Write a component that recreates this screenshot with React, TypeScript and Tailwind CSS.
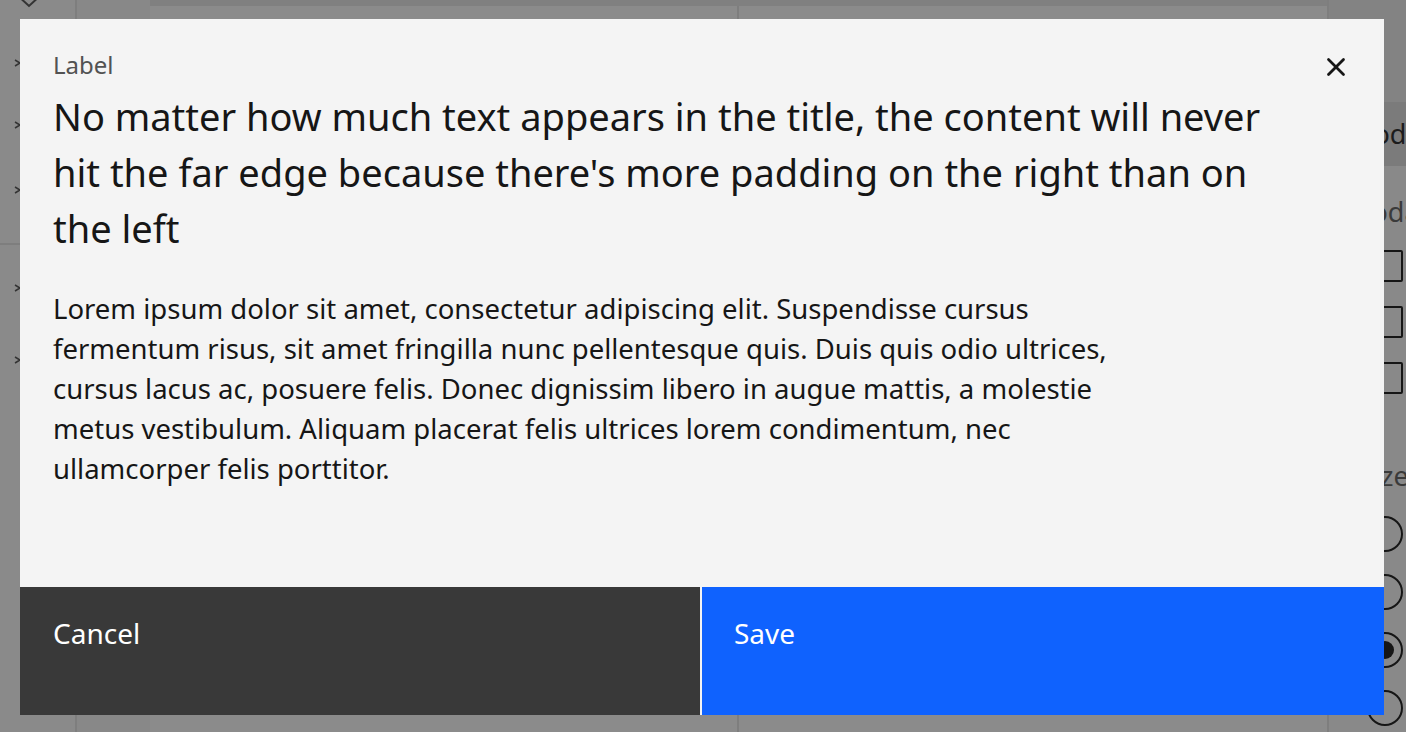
import { X } from "lucide-react";

const font = { fontFamily: '"Noto Sans", "Open Sans", sans-serif' };

const navRows = [63, 125, 190, 290, 362];

function Backdrop() {
   return (
      <div className="absolute inset-0 flex bg-[#8a8a8a]">
         {/* left nav */}
         <div className="w-[77px] shrink-0 flex flex-col border-r-2 border-[#7e7e7e]">
            <div className="h-[245px] border-b-2 border-[#7e7e7e] relative">
               <svg width="30" height="16" viewBox="0 0 30 16" className="absolute left-[14px] top-[-8px]">
                  <path d="M2 2 L15 14 L28 2" fill="none" stroke="#333" strokeWidth="2" />
               </svg>
               {navRows.slice(0, 3).map((y) => (
                  <svg key={y} width="8" height="8" viewBox="0 0 8 8" className="absolute left-[14px]" style={{ top: y - 4 }}>
                     <path d="M1 1 L6 4 L1 7" fill="none" stroke="#333" strokeWidth="1.5" />
                  </svg>
               ))}
            </div>
            <div className="flex-1 relative">
               {navRows.slice(3).map((y) => (
                  <svg key={y} width="8" height="8" viewBox="0 0 8 8" className="absolute left-[14px]" style={{ top: y - 247 - 4 }}>
                     <path d="M1 1 L6 4 L1 7" fill="none" stroke="#333" strokeWidth="1.5" />
                  </svg>
               ))}
            </div>
         </div>
         <div className="w-[73px] shrink-0 bg-[#888888]" />
         {/* main */}
         <div className="flex-1 flex flex-col">
            <div className="h-[6px] bg-[#808080]" />
            <div className="flex-1 flex">
               <div className="w-[589px] border-r-2 border-[#7e7e7e] bg-[#8b8b8b]" />
               <div className="flex-1 bg-[#8b8b8b]" />
            </div>
         </div>
         {/* right panel */}
         <div className="w-[79px] shrink-0 flex flex-col overflow-hidden border-l-2 border-[#7e7e7e] bg-[#898989] whitespace-nowrap" style={font}>
            <div className="h-[102px] shrink-0 bg-[#838383]" />
            <div className="h-[64px] shrink-0 bg-[#7b7b7b] flex items-center pl-[20px] text-[27px] text-[#1c1c1c]">Modal</div>
            <div className="pt-[26px] pl-[18px] text-[27px] leading-[40px] text-[#3a3a3a]">Modal</div>
            <div className="flex flex-col gap-[24px] pt-[18px] pl-[44px]">
               {[0, 1, 2].map((i) => (
                  <div key={i} className="w-[30px] h-[32px] border-2 border-[#161616] rounded-[2px]" />
               ))}
            </div>
            <div className="pt-[62px] pl-[30px] text-[27px] leading-[40px] text-[#3a3a3a]">Size</div>
            <div className="flex flex-col gap-[22px] pt-[20px] pl-[38px]">
               {[0, 1, 2, 3].map((i) => (
                  <div key={i} className="w-[36px] h-[36px] shrink-0 rounded-full border-2 border-[#161616] flex items-center justify-center">
                     {i === 2 && <div className="w-[18px] h-[18px] rounded-full bg-[#161616]" />}
                  </div>
               ))}
            </div>
         </div>
      </div>
   );
}

export default function App() {
   return (
      <div className="relative w-[1406px] h-[732px] overflow-hidden" style={font}>
         <Backdrop />
         <div className="absolute left-[20px] top-[19px] w-[1364px] h-[696px] bg-[#f4f4f4] flex flex-col text-[#161616]">
            <div className="relative pt-[30px] pl-[33px] pr-[101px]">
               <p className="text-[24px] leading-[32px] text-[#525252]">Label</p>
               <h2 className="mt-[7px] text-[38px] leading-[56px] font-normal">
                  No matter how much text appears in the title, the content will never hit the far edge because there's more padding on the right than on the left
               </h2>
               <button className="absolute right-0 top-0 w-[96px] h-[96px] flex items-center justify-center text-[#161616]">
                  <X size={30} strokeWidth={2.2} />
               </button>
            </div>
            <p className="mt-[33px] pl-[33px] w-[1113px] text-[27.5px] leading-[40px]">
               Lorem ipsum dolor sit amet, consectetur adipiscing elit. Suspendisse cursus fermentum risus, sit amet fringilla nunc pellentesque quis. Duis quis odio ultrices, cursus lacus ac, posuere felis. Donec dignissim libero in augue mattis, a molestie metus vestibulum. Aliquam placerat felis ultrices lorem condimentum, nec ullamcorper felis porttitor.
            </p>
            <div className="flex-1" />
            <div className="h-[128px] flex gap-[2px] text-[28px] text-white">
               <button className="w-[680px] bg-[#393939] pl-[33px] pt-[25px] flex items-start">Cancel</button>
               <button className="flex-1 bg-[#0f62fe] pl-[32px] pt-[25px] flex items-start">Save</button>
            </div>
         </div>
      </div>
   );
}
